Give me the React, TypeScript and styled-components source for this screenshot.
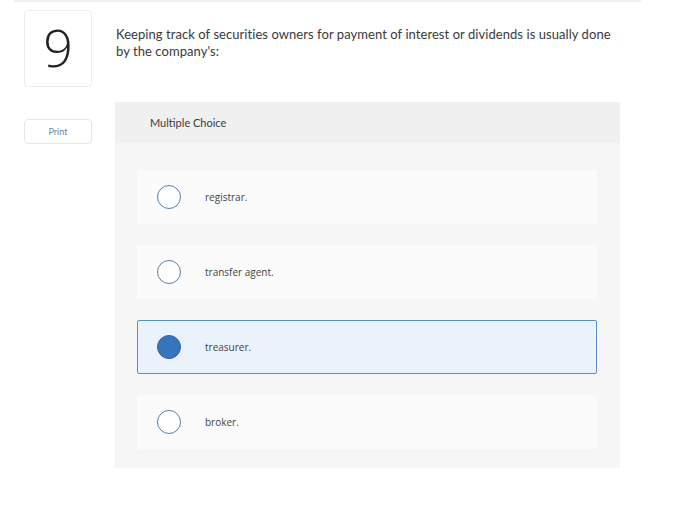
import styled, { createGlobalStyle } from 'styled-components';

const GlobalStyle = createGlobalStyle`
  html, body {
    margin: 0;
    padding: 0;
    background: #ffffff;
  }
  body {
    font-family: "Lato", "Open Sans", sans-serif;
    color: #333;
  }
`;

const Page = styled.div`
  width: 688px;
  height: 527px;
  padding: 0 47px 0 14px;
  box-sizing: border-box;
`;

const TopRule = styled.div`
  height: 2px;
  background: #f0f0f0;
`;

const Body = styled.div`
  display: grid;
  grid-template-columns: 78px 1fr;
  column-gap: 13px;
  padding: 8px 21px 0 10px;
`;

const Side = styled.div`
  display: flex;
  flex-direction: column;
  gap: 32px;
`;

const NumberBox = styled.div`
  width: 68px;
  height: 77px;
  box-sizing: border-box;
  border: 1px solid #ececec;
  border-radius: 4px;
  display: flex;
  align-items: center;
  justify-content: center;
  font-family: "Open Sans", sans-serif;
  font-weight: 300;
  font-size: 52px;
  color: #222;
  padding-bottom: 4px;
`;

const PrintButton = styled.button`
  width: 68px;
  height: 25px;
  box-sizing: border-box;
  border: 1px solid #e6e6e6;
  border-radius: 4px;
  background: #fff;
  color: #6d86a8;
  font-family: "Lato", sans-serif;
  font-size: 9px;
  padding: 0;
`;

const Main = styled.div`
  display: flex;
  flex-direction: column;
`;

const Question = styled.p`
  margin: 16px 0 0 1px;
  font-size: 13px;
  line-height: 17px;
  letter-spacing: 0.06px;
  color: #3a3a3a;
  width: 505px;
`;

const Panel = styled.section`
  margin-top: 42px;
  width: 505px;
  background: #f6f6f6;
`;

const PanelHeader = styled.div`
  height: 41px;
  background: #f0f0f0;
  display: flex;
  align-items: center;
  padding-left: 35px;
  font-size: 11px;
  color: #3a3a3a;
`;

const Options = styled.div`
  display: flex;
  flex-direction: column;
  gap: 21px;
  padding: 27px 23px 19px 22px;
`;

const Option = styled.div<{ $selected?: boolean }>`
  height: 54px;
  box-sizing: border-box;
  display: flex;
  align-items: center;
  padding-left: ${p => (p.$selected ? 19 : 20)}px;
  gap: 24px;
  border-radius: 2px;
  background: ${p => (p.$selected ? '#eaf2fb' : '#fbfbfb')};
  border: ${p => (p.$selected ? '1px solid #5b8fc7' : 'none')};
`;

const Radio = styled.span<{ $checked?: boolean }>`
  width: 24px;
  height: 24px;
  box-sizing: border-box;
  border-radius: 50%;
  border: 1.5px solid ${p => (p.$checked ? '#2e63a8' : '#5a7ea6')};
  background: ${p => (p.$checked ? '#3874bb' : '#fff')};
  flex-shrink: 0;
`;

const Label = styled.span`
  font-family: "Open Sans", sans-serif;
  font-size: 10px;
  color: #444;
`;

const choices = ['registrar.', 'transfer agent.', 'treasurer.', 'broker.'];
const selected = 2;

export default function App() {
  return (
    <>
      <GlobalStyle />
      <Page>
        <TopRule />
        <Body>
          <Side>
            <NumberBox>9</NumberBox>
            <PrintButton>Print</PrintButton>
          </Side>
          <Main>
            <Question>
              Keeping track of securities owners for payment of interest or dividends is usually done
              by the company's:
            </Question>
            <Panel>
              <PanelHeader>Multiple Choice</PanelHeader>
              <Options>
                {choices.map((c, i) => (
                  <Option key={c} $selected={i === selected}>
                    <Radio $checked={i === selected} />
                    <Label>{c}</Label>
                  </Option>
                ))}
              </Options>
            </Panel>
          </Main>
        </Body>
      </Page>
    </>
  );
}
